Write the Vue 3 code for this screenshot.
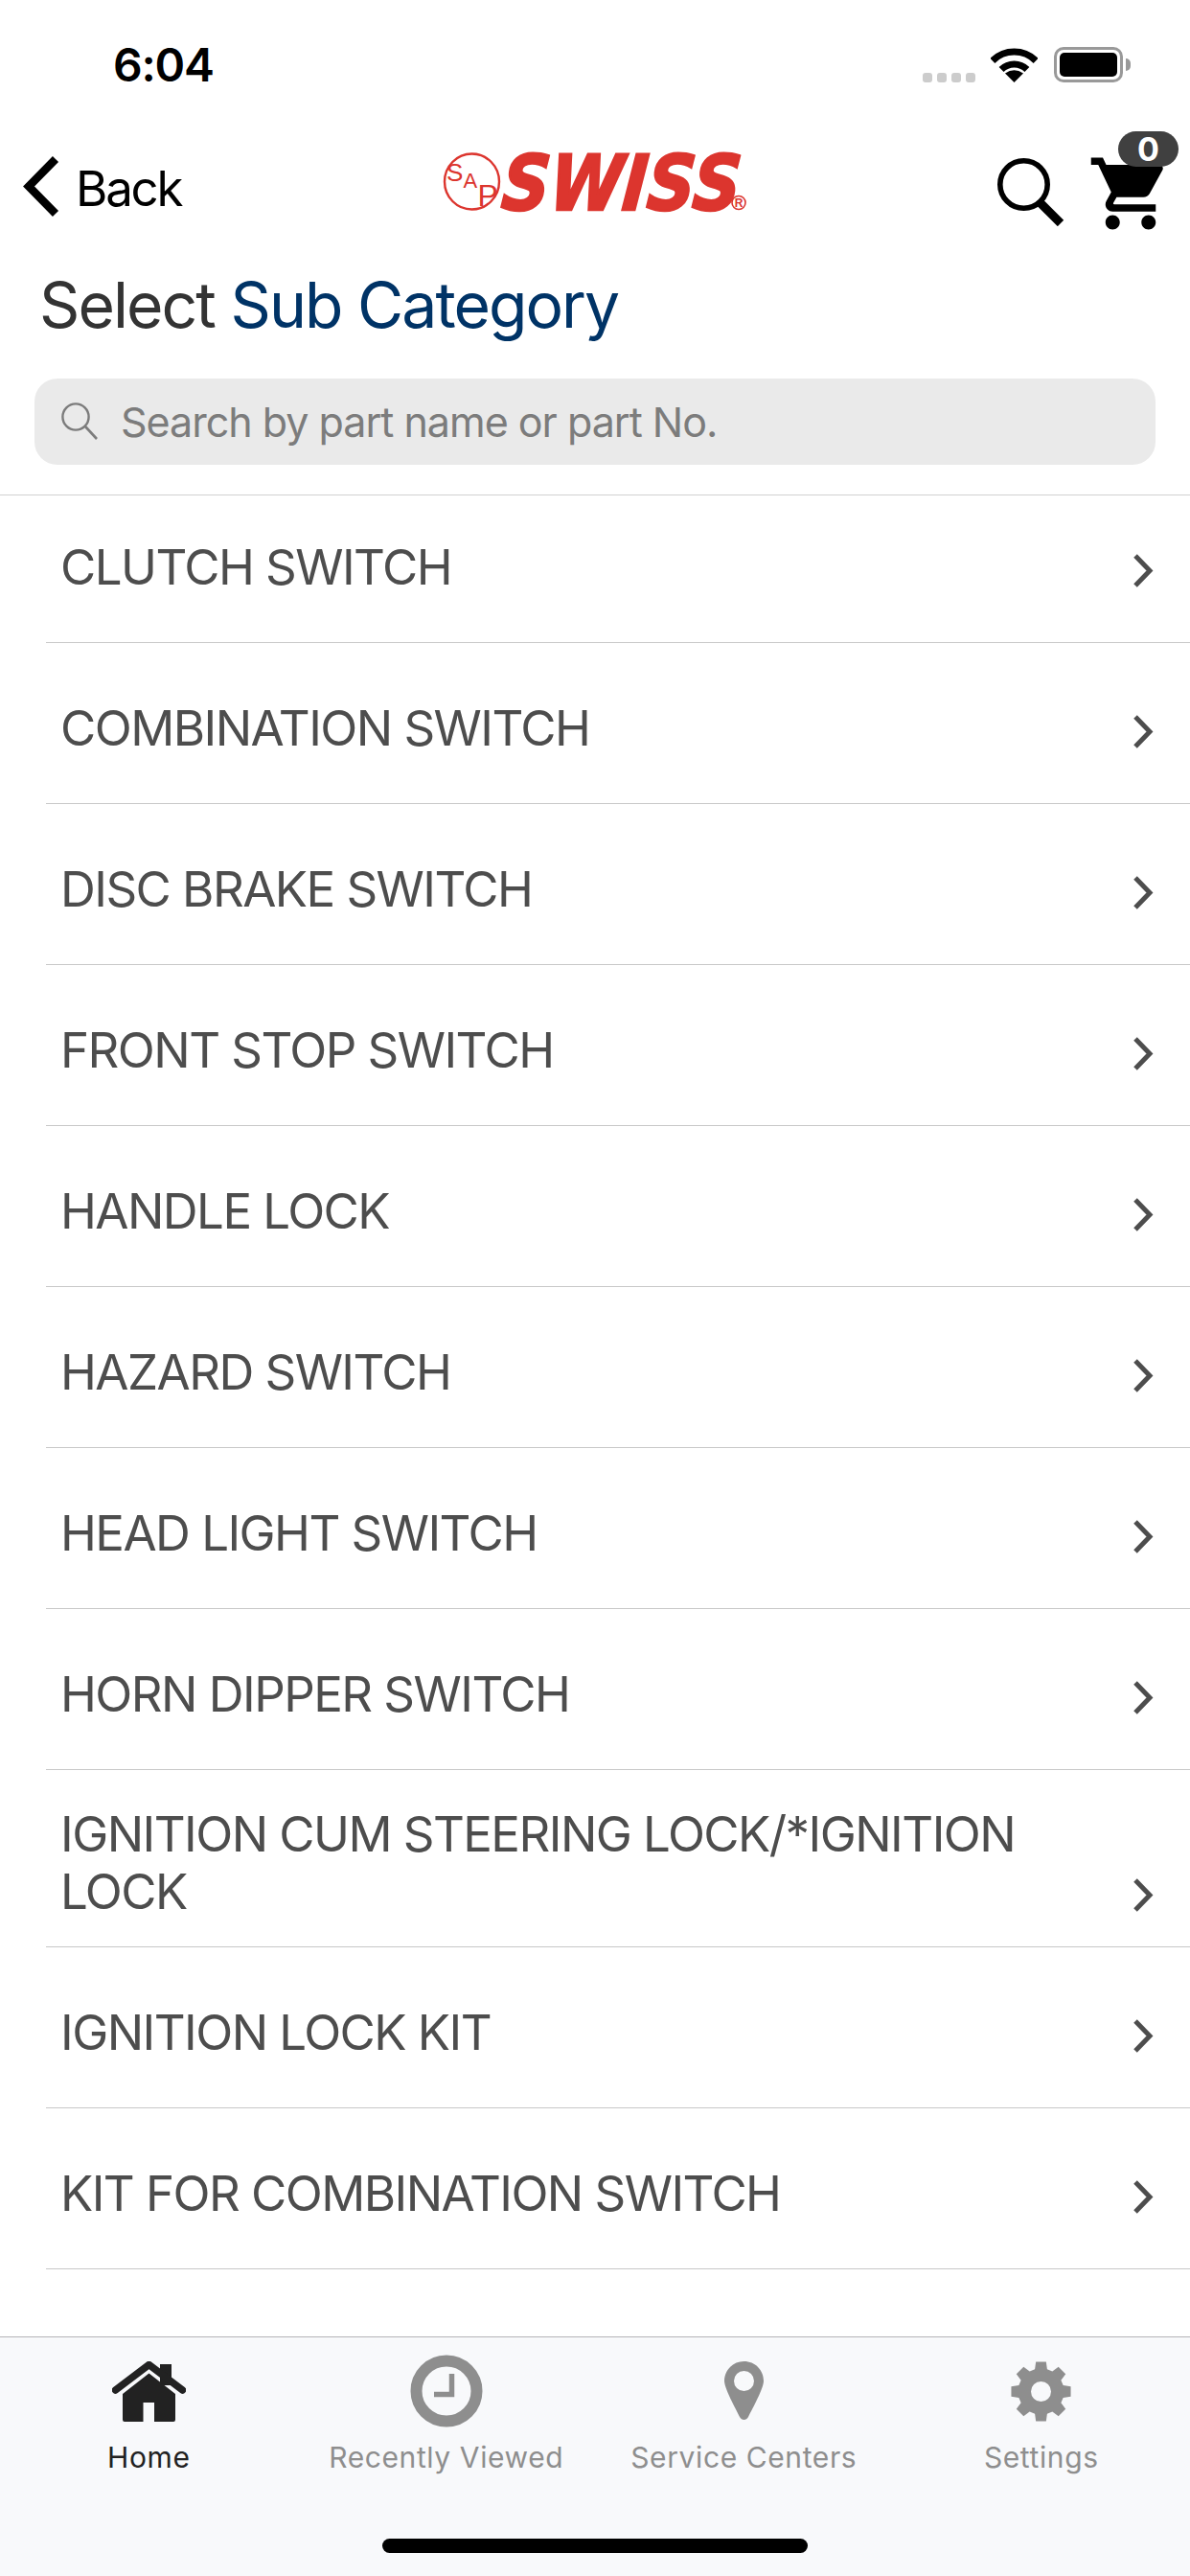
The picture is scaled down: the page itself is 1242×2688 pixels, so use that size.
<script setup>
const rows = [
  'CLUTCH SWITCH',
  'COMBINATION SWITCH',
  'DISC BRAKE SWITCH',
  'FRONT STOP SWITCH',
  'HANDLE LOCK',
  'HAZARD SWITCH',
  'HEAD LIGHT SWITCH',
  'HORN DIPPER SWITCH',
  'IGNITION CUM STEERING LOCK/*IGNITION LOCK',
  'IGNITION LOCK KIT',
  'KIT FOR COMBINATION SWITCH',
]

function gearPath() {
  const c = 31.5
  const pts = []
  const teeth = 8
  for (let i = 0; i < teeth; i++) {
    const a = (i / teeth) * Math.PI * 2 - Math.PI / 2
    const list = [
      [24, -0.27],
      [31.5, -0.17],
      [31.5, 0.17],
      [24, 0.27],
    ]
    for (const [r, d] of list) {
      pts.push(`${(c + r * Math.cos(a + d)).toFixed(2)} ${(c + r * Math.sin(a + d)).toFixed(2)}`)
    }
  }
  const h = 10.5
  return `M${pts.join('L')}Z M${c - h} ${c}a${h} ${h} 0 1 0 ${2 * h} 0a${h} ${h} 0 1 0 ${-2 * h} 0Z`
}
const gear = gearPath()
</script>

<template>
  <div class="page">
    <div class="status">
      <span class="time">6:04</span>
      <div class="status-right">
        <div class="dots"><i></i><i></i><i></i><i></i></div>
        <svg class="wifi" width="49" height="36" viewBox="0 0 49 36">
          <path d="M1.9 13.4A32 32 0 0 1 47.1 13.4" fill="none" stroke="#000" stroke-width="7" />
          <path d="M11.1 22.6A19 19 0 0 1 37.9 22.6" fill="none" stroke="#000" stroke-width="7" />
          <path d="M24.5 36L15 26.5Q24.5 20 34 26.5Z" fill="#000" />
        </svg>
        <div class="battery"><div class="battery-fill"></div></div>
      </div>
    </div>

    <div class="nav">
      <div class="back">
        <svg width="38" height="63" viewBox="0 0 38 63">
          <polyline points="34,3 6,31.5 34,60" fill="none" stroke="#000" stroke-width="8.5" />
        </svg>
        <span>Back</span>
      </div>
      <svg class="logo" width="317" height="84" viewBox="0 0 317 84">
        <ellipse cx="29.5" cy="30.5" rx="28.5" ry="29" fill="none" stroke="#dc352e" stroke-width="2.4" />
        <text x="3" y="30" class="sap sap-s">S</text>
        <text x="20.500" y="37" class="sap sap-a">A</text>
        <text x="35.500" y="56" class="sap sap-p">P</text>
        <text transform="translate(59 60) skewX(-5)" class="swiss" stroke="#dc352e" stroke-width="2.5" textLength="249" lengthAdjust="spacingAndGlyphs">SWISS</text>
        <circle cx="308" cy="52.5" r="7" fill="none" stroke="#dc352e" stroke-width="1.6" />
        <text x="308" y="57" class="reg" text-anchor="middle">R</text>
      </svg>
      <div class="nav-actions">
        <svg class="search-big" width="70" height="71" viewBox="0 0 70 71">
          <circle cx="27.500" cy="27.500" r="24.700" fill="none" stroke="#000" stroke-width="5.600" />
          <line x1="44" y1="46" x2="66" y2="68" stroke="#000" stroke-width="9" />
        </svg>
        <div class="cart">
          <svg width="90" height="90" viewBox="0 0 24 24">
            <path d="M7 18c-1.1 0-1.99.9-1.99 2S5.9 22 7 22s2-.9 2-2-.9-2-2-2zM1 2v2h2l3.6 7.59-1.35 2.45c-.16.28-.25.61-.25.96 0 1.1.9 2 2 2h12v-2H7.42c-.14 0-.25-.11-.25-.25l.03-.12.9-1.63h7.45c.75 0 1.41-.41 1.75-1.03l3.58-6.49c.08-.14.12-.31.12-.48 0-.55-.45-1-1-1H5.21l-.94-2H1zm16 16c-1.1 0-1.99.9-1.99 2s.89 2 1.99 2 2-.9 2-2-.9-2-2-2z" fill="#000" />
          </svg>
          <span class="badge">0</span>
        </div>
      </div>
    </div>

    <h1 class="title">Select <span>Sub Category</span></h1>

    <div class="searchbar">
      <svg width="40" height="40" viewBox="0 0 40 40">
        <circle cx="16" cy="15" r="13.600" fill="none" stroke="#7c7c7c" stroke-width="2.400" />
        <line x1="26" y1="25" x2="38" y2="38" stroke="#7c7c7c" stroke-width="2.600" />
      </svg>
      <span>Search by part name or part No.</span>
    </div>

    <div class="list">
      <div v-for="(r, i) in rows" :key="r" class="row" :class="{ first: i === 0 }">
        <div class="row-inner">
          <span class="row-text">{{ r }}</span>
          <svg class="chev" width="22" height="37" viewBox="0 0 22 37">
            <polyline points="3,3 18,18.500 3,34" fill="none" stroke="#4d4d4d" stroke-width="5" />
          </svg>
        </div>
      </div>
    </div>

    <div class="tabbar">
      <div class="tabs">
        <div class="tab active">
          <div class="tab-icon">
            <svg width="77" height="63" viewBox="0 0 77 63">
              <path d="M50 3h12v22H50z" fill="#222" />
              <path d="M3.500 30L38.500 3.500L73.500 30" fill="none" stroke="#222" stroke-width="7.500" stroke-linecap="round" stroke-linejoin="round" />
              <path d="M38.500 12.500L66 34V61a2 2 0 0 1-2 2H44V43H32.500V63H13a2 2 0 0 1-2-2V34Z" fill="#222" />
            </svg>
          </div>
          <span>Home</span>
        </div>
        <div class="tab">
          <div class="tab-icon">
            <svg width="76" height="76" viewBox="0 0 76 76">
              <circle cx="38" cy="38" r="31.500" fill="none" stroke="#8e8e8e" stroke-width="12" />
              <path d="M43.500 20V41.500H25" fill="none" stroke="#8e8e8e" stroke-width="5.500" />
            </svg>
          </div>
          <span>Recently Viewed</span>
        </div>
        <div class="tab">
          <div class="tab-icon">
            <svg width="41" height="62" viewBox="0 0 41 62">
              <path fill-rule="evenodd" d="M20.500 0C32 0 41 9 41 20.500C41 28 30 48 25 58C23 62 18 62 16 58C11 48 0 28 0 20.500C0 9 9 0 20.500 0ZM20.500 10A10.500 10.500 0 1 0 20.500 31A10.500 10.500 0 1 0 20.500 10Z" fill="#8e8e8e" />
            </svg>
          </div>
          <span>Service Centers</span>
        </div>
        <div class="tab">
          <div class="tab-icon">
            <svg width="63" height="63" viewBox="0 0 63 63">
              <path fill-rule="evenodd" :d="gear" fill="#8e8e8e" />
            </svg>
          </div>
          <span>Settings</span>
        </div>
      </div>
      <div class="home-bar"></div>
    </div>
  </div>
</template>

<style scoped>
.page {
  width: 1242px;
  height: 2688px;
  display: flex;
  flex-direction: column;
  overflow: hidden;
  background: #fff;
  font-family: Inter, "Noto Sans", sans-serif;
  color: #000;
}
.status {
  height: 135px;
  box-sizing: border-box;
  padding: 44px 62px 0 118px;
  display: flex;
  align-items: flex-start;
  justify-content: space-between;
  flex: none;
}
.time {
  font-size: 48px;
  line-height: 48px;
  font-weight: 600;
  letter-spacing: -1.2px;
}
.status-right {
  display: flex;
  align-items: flex-end;
  margin-top: 5px;
}
.dots {
  display: flex;
  gap: 5px;
  margin-right: 16px;
}
.dots i {
  display: block;
  width: 10px;
  height: 10px;
  border-radius: 3px;
  background: #cccccc;
}
.wifi {
  display: block;
  margin-right: 17px;
}
.battery {
  position: relative;
  width: 72px;
  height: 37px;
  box-sizing: border-box;
  border: 3px solid #999;
  border-radius: 10px;
  padding: 3px;
  margin-right: 8px;
}
.battery::after {
  content: "";
  position: absolute;
  right: -11px;
  top: 9px;
  width: 5px;
  height: 13px;
  background: #999;
  border-radius: 0 6px 6px 0;
}
.battery-fill {
  height: 100%;
  background: #000;
  border-radius: 5px;
}
.nav {
  height: 110px;
  flex: none;
  display: grid;
  grid-template-columns: 1fr auto 1fr;
  align-items: center;
}
.back {
  display: flex;
  align-items: center;
  gap: 17px;
  padding-left: 24px;
  margin-top: 14px;
  font-size: 51px;
  line-height: 60px;
  letter-spacing: -2.2px;
}
.back svg {
  display: block;
  flex: none;
  margin-top: -5px;
}
.logo {
  display: block;
  margin-top: 22px;
  overflow: visible;
}
.sap {
  font-family: "Liberation Sans", sans-serif;
  fill: #dc352e;
}
.sap-s {
  font-size: 26px;
}
.sap-a {
  font-size: 22px;
}
.sap-p {
  font-size: 32px;
}
.swiss {
  font-family: "DejaVu Sans", sans-serif;
  font-weight: 700;
  font-style: italic;
  font-size: 80px;
  fill: #dc352e;
}
.reg {
  font-family: "Liberation Sans", sans-serif;
  font-size: 12px;
  font-weight: 700;
  fill: #dc352e;
}
.nav-actions {
  display: flex;
  justify-content: flex-end;
  align-items: flex-start;
  padding-right: 12px;
  margin-top: -6px;
}
.search-big {
  display: block;
  margin-top: 28px;
  margin-right: 24px;
}
.cart {
  position: relative;
  width: 95px;
  height: 100px;
  padding-top: 20px;
  box-sizing: border-box;
}
.cart svg {
  display: block;
}
.badge {
  position: absolute;
  top: 0;
  right: 0;
  width: 63px;
  height: 37px;
  border-radius: 19px;
  background: #404040;
  color: #fff;
  font-size: 34px;
  font-weight: 700;
  line-height: 37px;
  text-align: center;
}
.title {
  margin: 33px 0 0;
  padding-left: 41px;
  font-size: 66px;
  line-height: 80px;
  font-weight: 400;
  letter-spacing: -1.95px;
  color: #333;
  flex: none;
}
.title span {
  color: #003366;
}
.searchbar {
  margin: 37px 36px 31px;
  height: 90px;
  flex: none;
  box-sizing: border-box;
  padding-left: 27px;
  display: flex;
  align-items: center;
  gap: 23px;
  border-radius: 24px;
  background: #eaeaea;
  color: #7c7c7c;
  font-size: 43px;
  letter-spacing: -1px;
}
.searchbar svg {
  display: block;
  flex: none;
}
.list {
  flex: 1;
  min-height: 0;
  border-top: 1px solid #d0d0d0;
  overflow: hidden;
}
.row {
  margin-left: 48px;
  min-height: 168px;
  box-sizing: border-box;
  padding: 36px 38px 28px 15px;
  border-bottom: 1px solid #c8c8c8;
  display: flex;
  align-items: center;
}
.row.first {
  min-height: 154px;
  padding-top: 22px;
}
.row-inner {
  flex: 1;
  display: flex;
  align-items: flex-end;
  justify-content: space-between;
}
.row-text {
  flex: 1;
  font-size: 51px;
  line-height: 60px;
  color: #4d4d4d;
  letter-spacing: -1.55px;
  padding-right: 60px;
  position: relative;
  top: 1px;
}
.chev {
  display: block;
  flex: none;
  margin-bottom: 7px;
}
.tabbar {
  height: 250px;
  flex: none;
  box-sizing: border-box;
  border-top: 1px solid #b4b4b8;
  background: #f8f9fb;
  display: flex;
  flex-direction: column;
}
.tabs {
  display: grid;
  grid-template-columns: repeat(4, 1fr);
  padding-top: 18px;
}
.tab {
  display: flex;
  flex-direction: column;
  align-items: center;
  color: #8e8e8e;
  font-size: 30px;
  line-height: 36px;
  letter-spacing: 0.6px;
}
.tab.active {
  color: #222;
}
.tab-icon {
  height: 76px;
  display: flex;
  align-items: center;
  justify-content: center;
  margin-bottom: 13px;
}
.tab-icon svg {
  display: block;
}
.home-bar {
  margin: auto auto 24px;
  width: 444px;
  height: 15px;
  border-radius: 8px;
  background: #000;
}
</style>
